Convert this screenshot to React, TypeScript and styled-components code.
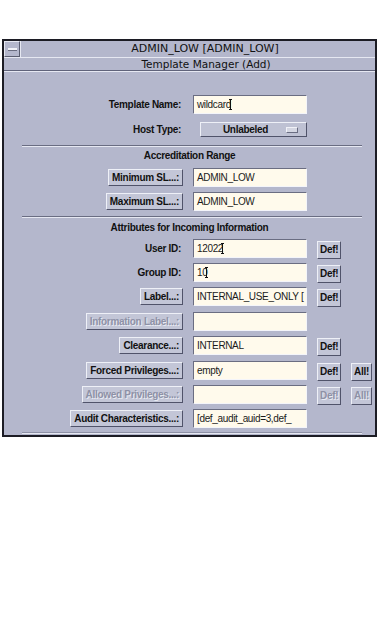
import React from "react";
import styled, { createGlobalStyle, css } from "styled-components";

const Global = createGlobalStyle`
  html, body { margin: 0; padding: 0; background: #ffffff; }
  body { font-family: "Liberation Sans", Arial, sans-serif; }
`;

const BG = "#b4b7cc";

const Page = styled.div`
  width: 380px;
  height: 633px;
  padding-top: 39px;
  box-sizing: border-box;
`;

const Window = styled.div`
  margin-left: 2px;
  width: 375px;
  height: 398px;
  box-sizing: border-box;
  border: 2px solid #1c1c24;
  background: ${BG};
  display: flex;
  flex-direction: column;
`;

const TitleBar = styled.div`
  display: flex;
  height: 16px;
  border-bottom: 1px solid #e6e8f2;
`;

const MenuButton = styled.div`
  width: 16px;
  height: 16px;
  box-sizing: border-box;
  border: 1px solid;
  border-color: #e6e8f2 #5a5d70 #5a5d70 #e6e8f2;
  display: flex;
  align-items: center;
  justify-content: center;
  &::after {
    content: "";
    width: 9px;
    height: 2px;
    background: #f2f3f8;
    border-bottom: 1px solid #6a6d80;
  }
`;

const TitleText = styled.div`
  flex: 1;
  text-align: center;
  font-family: "DejaVu Sans", sans-serif;
  font-size: 11px;
  line-height: 16px;
  color: #111;
  padding-left: 14px;
  border-left: 1px solid #e6e8f2;
`;

const SubTitle = styled.div`
  height: 12px;
  text-align: center;
  font-family: "DejaVu Sans", sans-serif;
  font-size: 10.5px;
  line-height: 12px;
  color: #111;
  padding-left: 33px;
  border-bottom: 1px solid #60637a;
  box-shadow: 0 1px 0 #e6e8f2;
`;

const Form = styled.div`
  display: flex;
  flex-direction: column;
  padding-top: 24px;
`;

const Row = styled.div<{ $mt?: number }>`
  display: grid;
  grid-template-columns: 179px 114px 24px 22px;
  column-gap: 10px;
  align-items: center;
  height: 19px;
  margin-top: ${(p) => p.$mt ?? 5}px;
`;

const LabelCell = styled.div`
  display: flex;
  justify-content: flex-end;
  align-items: center;
`;

const boldText = css`
  font-family: "Liberation Sans", Arial, sans-serif;
  font-size: 10px;
  font-weight: bold;
  letter-spacing: -0.3px;
  color: #111;
`;

const Label = styled.span`
  ${boldText}
  padding-right: 2px;
`;

const Btn = styled.button<{ $disabled?: boolean }>`
  ${boldText}
  height: 17px;
  padding: 0 3px;
  margin: 0;
  background: #c3c6d7;
  border: 1px solid;
  border-color: #eef0f7 #50536a #50536a #eef0f7;
  line-height: 15px;
  white-space: nowrap;
  ${(p) =>
    p.$disabled &&
    css`
      color: #8e91a6;
      text-shadow: 1px 1px 0 #e8eaf2;
    `}
`;

const Field = styled.div`
  height: 19px;
  box-sizing: border-box;
  background: #fffaec;
  border: 1px solid;
  border-color: #6a6d82 #f4f5fa #f4f5fa #6a6d82;
  font-family: "Liberation Sans", Arial, sans-serif;
  font-size: 10px;
  letter-spacing: -0.35px;
  line-height: 17px;
  padding-left: 3px;
  color: #1a1a1a;
  white-space: nowrap;
  overflow: hidden;
`;

const Caret = styled.span`
  display: inline-block;
  width: 1px;
  height: 11px;
  margin-left: -1px;
  background: #111;
  vertical-align: -2px;
  position: relative;
  &::before, &::after {
    content: "";
    position: absolute;
    left: -1px;
    width: 3px;
    height: 1px;
    background: #111;
  }
  &::before { top: 0; }
  &::after { bottom: 0; }
`;

const Option = styled.div`
  margin-left: 7px;
  width: 107px;
  height: 15px;
  box-sizing: border-box;
  background: #bec1d3;
  border: 1px solid;
  border-color: #eef0f7 #50536a #50536a #eef0f7;
  display: flex;
  align-items: center;
  ${boldText}
`;

const OptionText = styled.span`
  flex: 1;
  text-align: center;
  padding-left: 4px;
`;

const OptionMark = styled.span`
  width: 10px;
  height: 4px;
  margin-right: 8px;
  background: #d4d6e2;
  border: 1px solid;
  border-color: #f0f1f7 #6a6d82 #6a6d82 #f0f1f7;
`;

const Separator = styled.div<{ $mt: number; $light?: boolean }>`
  margin: ${(p) => p.$mt}px 13px 0 18px;
  height: 0;
  border-top: 1px solid ${(p) => (p.$light ? "#8e91a6" : "#6a6d82")};
  border-bottom: 1px solid #e6e8f2;
`;

const Heading = styled.div<{ $mt: number }>`
  ${boldText}
  margin-top: ${(p) => p.$mt}px;
  height: 12px;
  text-align: center;
  line-height: 12px;
`;

const SmallBtn = styled(Btn)`
  padding: 0 2px;
  height: 18px;
  justify-self: start;
`;

type RowDef = {
  label: string;
  button?: boolean;
  disabled?: boolean;
  value: string;
  caret?: boolean;
  def?: "on" | "off";
  all?: "on" | "off";
  mt: number;
};

const attrRows: RowDef[] = [
  { label: "User ID:", value: "12022", caret: true, def: "on", mt: 5 },
  { label: "Group ID:", value: "10", caret: true, def: "on", mt: 5 },
  { label: "Label...:", button: true, value: "INTERNAL_USE_ONLY [", def: "on", mt: 5 },
  { label: "Information Label...:", button: true, disabled: true, value: "", mt: 6 },
  { label: "Clearance...:", button: true, value: "INTERNAL", def: "on", mt: 5 },
  { label: "Forced Privileges...:", button: true, value: "empty", def: "on", all: "on", mt: 6 },
  { label: "Allowed Privileges...:", button: true, disabled: true, value: "", def: "off", all: "off", mt: 5 },
  { label: "Audit Characteristics...:", button: true, value: "[def_audit_auid=3,def_", mt: 5 },
];

function FormRow({ r }: { r: RowDef }) {
  return (
    <Row $mt={r.mt}>
      <LabelCell>
        {r.button ? <Btn $disabled={r.disabled}>{r.label}</Btn> : <Label>{r.label}</Label>}
      </LabelCell>
      <Field>
        {r.value}
        {r.caret && <Caret />}
      </Field>
      <div>{r.def && <SmallBtn $disabled={r.def === "off"}>Def!</SmallBtn>}</div>
      <div>{r.all && <SmallBtn $disabled={r.all === "off"}>All!</SmallBtn>}</div>
    </Row>
  );
}

export default function App() {
  return (
    <Page>
      <Global />
      <Window>
        <TitleBar>
          <MenuButton />
          <TitleText>ADMIN_LOW [ADMIN_LOW]</TitleText>
        </TitleBar>
        <SubTitle>Template Manager (Add)</SubTitle>
        <Form>
          <Row $mt={0}>
            <LabelCell>
              <Label>Template Name:</Label>
            </LabelCell>
            <Field>
              wildcard<Caret />
            </Field>
          </Row>
          <Row $mt={6}>
            <LabelCell>
              <Label>Host Type:</Label>
            </LabelCell>
            <Option>
              <OptionText>Unlabeled</OptionText>
              <OptionMark />
            </Option>
          </Row>
          <Separator $mt={6} />
          <Heading $mt={3}>Accreditation Range</Heading>
          <Row $mt={6}>
            <LabelCell>
              <Btn>Minimum SL...:</Btn>
            </LabelCell>
            <Field>ADMIN_LOW</Field>
          </Row>
          <Row $mt={5}>
            <LabelCell>
              <Btn>Maximum SL...:</Btn>
            </LabelCell>
            <Field>ADMIN_LOW</Field>
          </Row>
          <Separator $mt={5} />
          <Heading $mt={4}>Attributes for Incoming Information</Heading>
          {attrRows.map((r) => (
            <FormRow key={r.label} r={r} />
          ))}
          <Separator $mt={4} $light />
        </Form>
      </Window>
    </Page>
  );
}
